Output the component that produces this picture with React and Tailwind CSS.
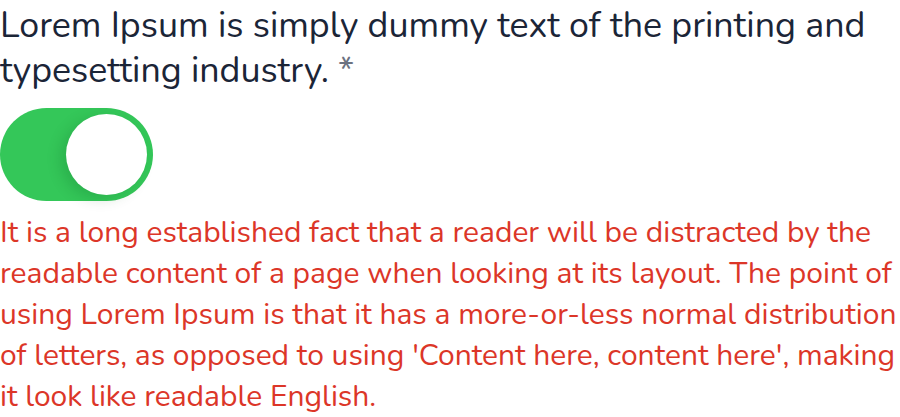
export default function App() {
  return (
    <div className="w-[900px] bg-white font-['Nunito','Lato','Noto_Sans',sans-serif]">
      <h1 className="pt-[3px] text-[35.8px] leading-[45px] font-normal text-[#1b2537]">
        Lorem Ipsum is simply dummy text of the printing and
        <br />
        typesetting industry. <span className="text-[#6b7280]">*</span>
      </h1>
      <button
        type="button"
        role="switch"
        aria-checked="true"
        className="mt-[15px] flex h-[93px] w-[153px] items-center justify-end rounded-full bg-[#34c759] pr-[6px]"
      >
        <span className="block h-[81px] w-[81px] rounded-full bg-white shadow-[-6px_4px_14px_rgba(0,80,20,0.18)]" />
      </button>
      <p className="mt-[11px] text-[30px] leading-[41px] text-[#dc3628]">
        It is a long established fact that a reader will be distracted by the
        <br />
        readable content of a page when looking at its layout. The point of
        <br />
        using Lorem Ipsum is that it has a more-or-less normal distribution
        <br />
        of letters, as opposed to using 'Content here, content here', making
        <br />
        it look like readable English.
      </p>
    </div>
  );
}
